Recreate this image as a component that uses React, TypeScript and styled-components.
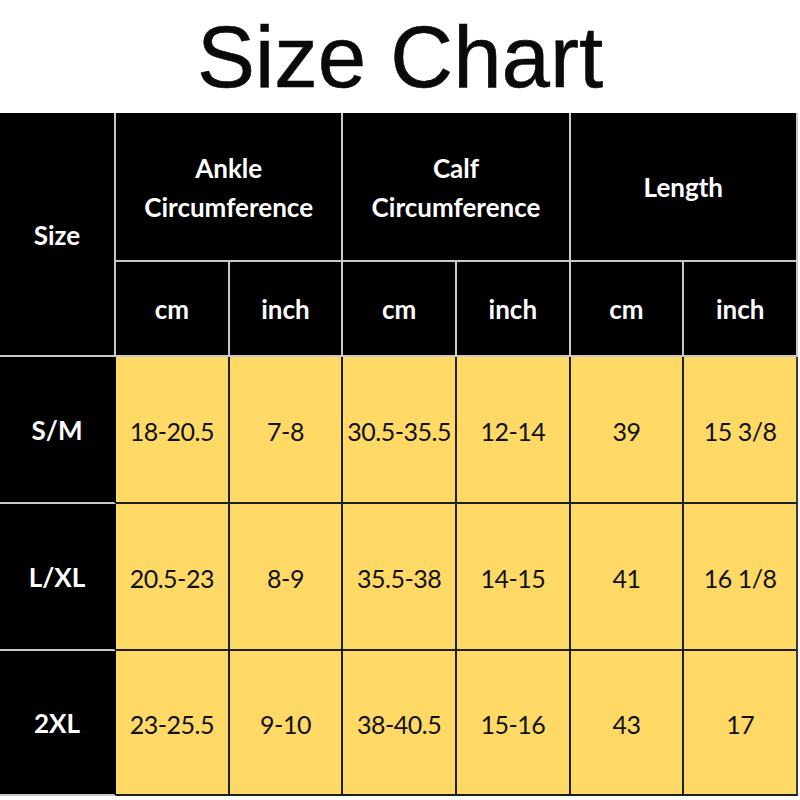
import React from 'react';
import styled, { createGlobalStyle } from 'styled-components';

const GlobalStyle = createGlobalStyle`
  html, body {
    margin: 0;
    padding: 0;
    background: #ffffff;
  }
  * {
    box-sizing: border-box;
  }
`;

const Page = styled.div`
  width: 800px;
  height: 800px;
  background: #ffffff;
  overflow: hidden;
`;

const Title = styled.h1`
  margin: 0;
  height: 113px;
  display: flex;
  align-items: center;
  justify-content: center;
  font-family: 'Liberation Sans', Arial, sans-serif;
  font-weight: 400;
  font-size: 87px;
  color: #0a0a0a;
  padding-top: 0;
  -webkit-text-stroke: 0.6px #0a0a0a;
`;

const Grid = styled.div`
  width: 798px;
  display: grid;
  grid-template-columns: 116px repeat(6, 1fr);
  grid-template-rows: 149px 95px 147px 147px 145px;
  background: #000;
`;

const HeadCell = styled.div<{ $col?: string; $row?: string; $edge?: string }>`
  grid-column: ${p => p.$col || 'auto'};
  grid-row: ${p => p.$row || 'auto'};
  display: flex;
  align-items: center;
  justify-content: center;
  text-align: center;
  white-space: nowrap;
  background: #000;
  color: #fff;
  font-family: Lato, 'Noto Sans', sans-serif;
  font-weight: 700;
  font-size: 26px;
  line-height: 39px;
  border-right: 2px solid ${p => p.$edge || '#c9c9c9'};
  border-bottom: 2px solid #c9c9c9;
  padding-top: 2px;
`;

const DataCell = styled.div<{ $last?: boolean }>`
  display: flex;
  align-items: center;
  justify-content: center;
  white-space: nowrap;
  background: #ffd966;
  color: #111;
  font-family: Lato, 'Noto Sans', sans-serif;
  font-size: 25px;
  letter-spacing: -0.5px;
  border-right: 2px solid ${p => (p.$last ? '#3a3a3a' : '#1e1e1e')};
  border-bottom: 2px solid #1e1e1e;
  padding-top: 2px;
`;

const rows = [
  { size: 'S/M', values: ['18-20.5', '7-8', '30.5-35.5', '12-14', '39', '15 3/8'] },
  { size: 'L/XL', values: ['20.5-23', '8-9', '35.5-38', '14-15', '41', '16 1/8'] },
  { size: '2XL', values: ['23-25.5', '9-10', '38-40.5', '15-16', '43', '17'] },
];

const groups = [['Ankle', 'Circumference'], ['Calf', 'Circumference'], ['Length']];

export default function App() {
  return (
    <Page>
      <GlobalStyle />
      <Title>Size Chart</Title>
      <Grid>
        <HeadCell $row="1 / span 2">Size</HeadCell>
        {groups.map((g, i) => (
          <HeadCell key={i} $col="span 2">
            <span>
              {g.map((line, j) => (
                <React.Fragment key={j}>
                  {j > 0 && <br />}
                  {line}
                </React.Fragment>
              ))}
            </span>
          </HeadCell>
        ))}
        {groups.map((_, i) => (
          <React.Fragment key={i}>
            <HeadCell>cm</HeadCell>
            <HeadCell>inch</HeadCell>
          </React.Fragment>
        ))}
        {rows.map(r => (
          <React.Fragment key={r.size}>
            <HeadCell $edge="#000">{r.size}</HeadCell>
            {r.values.map((v, i) => (
              <DataCell key={i} $last={i === r.values.length - 1}>
                {v}
              </DataCell>
            ))}
          </React.Fragment>
        ))}
      </Grid>
    </Page>
  );
}
